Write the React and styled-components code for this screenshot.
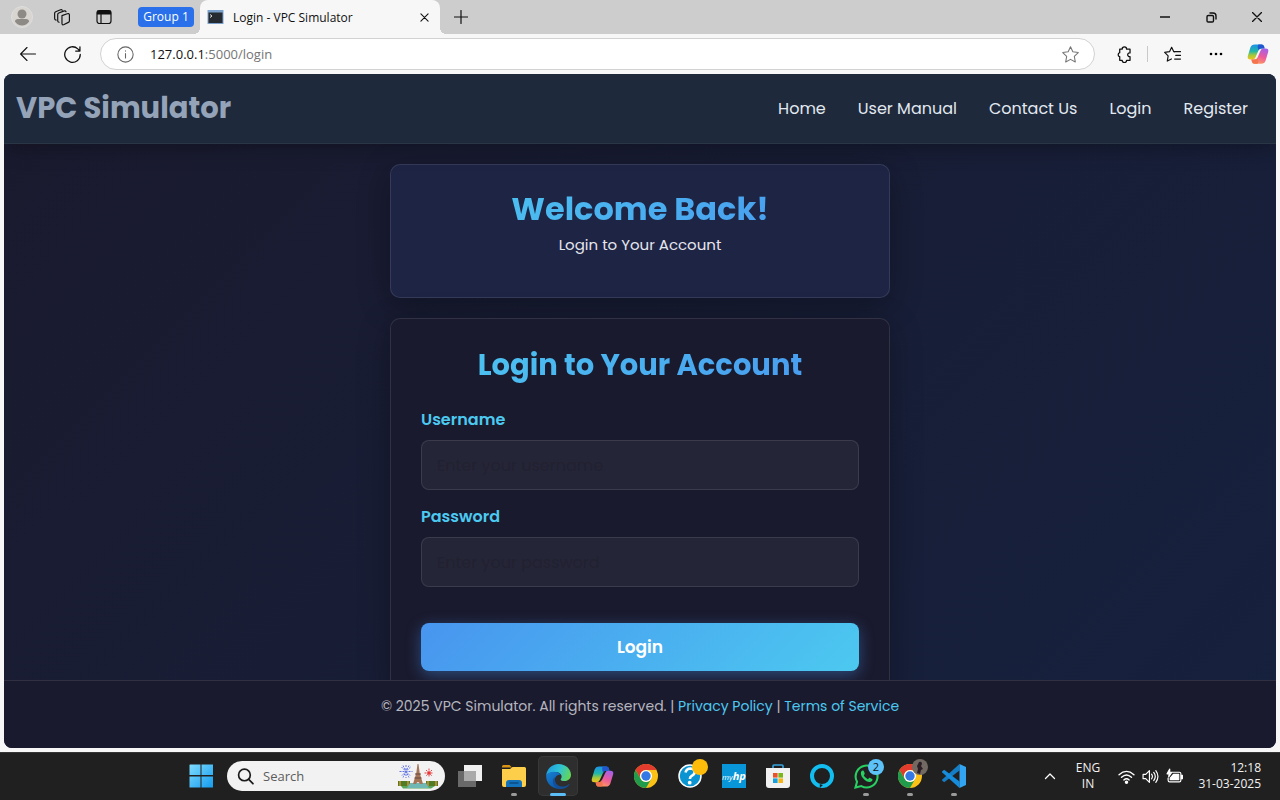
import React from "react";
import styled, { createGlobalStyle } from "styled-components";

const ui = `"Segoe UI", "Open Sans", "Noto Sans", sans-serif`;
const site = `Poppins, Inter, "Open Sans", sans-serif`;

const GlobalStyle = createGlobalStyle`
  *, *::before, *::after { box-sizing: border-box; }
  body { margin: 0; background: #f7f7f7; font-family: ${ui}; }
  button, input { font: inherit; }
  h1, h2, p { margin: 0; }
`;

const Desktop = styled.div`
  height: 100vh;
  display: flex;
  flex-direction: column;
  overflow: hidden;
`;

/* Browser chrome */
const TabStrip = styled.div`
  flex: none;
  height: 34px;
  display: flex;
  align-items: center;
  background: #cdcdcd;
  color: #111;
`;

const ChromeButton = styled.button`
  flex: none;
  width: ${(p) => p.$w || 42}px;
  height: 34px;
  padding: 0;
  border: 0;
  background: none;
  color: ${(p) => p.$color || "#111"};
  display: flex;
  align-items: center;
  justify-content: center;
`;

const ProfileTools = styled.div`
  display: flex;
  padding-left: 1px;
  width: 138px;
`;

const GroupChip = styled.button`
  width: 56px;
  height: 20px;
  padding: 0;
  border: 0;
  border-radius: 4px;
  background: #2970ea;
  color: #fff;
  font-size: 12px;
  line-height: 20px;
`;

const Tab = styled.div`
  position: relative;
  align-self: stretch;
  width: 240px;
  margin-left: 6px;
  padding-left: 7px;
  display: flex;
  align-items: center;
  gap: 9px;
  background: #f7f7f7;
  border-radius: 8px 8px 0 0;
  &::before, &::after {
    content: "";
    position: absolute;
    bottom: 0;
    width: 6px;
    height: 6px;
  }
  &::before { right: 100%; background: radial-gradient(circle at 0 0, #cdcdcd 6px, #f7f7f7 6px); }
  &::after { left: 100%; background: radial-gradient(circle at 100% 0, #cdcdcd 6px, #f7f7f7 6px); }
`;

const TabTitle = styled.span`
  flex: 1;
  font-size: 12px;
  white-space: nowrap;
`;

const WindowControls = styled.div`
  margin-left: auto;
  display: flex;
`;

const Toolbar = styled.div`
  flex: none;
  height: 40px;
  padding: 0 2px 0 6px;
  display: flex;
  align-items: center;
  background: #f7f7f7;
`;

const AddressBar = styled.div`
  flex: 1;
  height: 32px;
  margin: 0 8px 0 6px;
  padding: 0 5px 0 16px;
  display: flex;
  align-items: center;
  gap: 16px;
  background: #fff;
  border: 1px solid #d2d2d2;
  border-radius: 16px;
`;

const Url = styled.span`
  flex: 1;
  font-size: 13px;
  color: #757575;
  b { font-weight: 400; color: #111; }
`;

const ToolbarDivider = styled.span`
  width: 1px;
  height: 16px;
  margin: 0 2px;
  background: #c9c9c9;
`;

/* Web page */
const Frame = styled.div`
  flex: 1;
  min-height: 0;
  padding: 0 4px 4px;
  background: #f7f7f7;
  display: flex;
`;

const Page = styled.div`
  flex: 1;
  display: flex;
  flex-direction: column;
  overflow: hidden;
  border-radius: 8px;
  background: linear-gradient(135deg, #1a1a2e, #16213e);
  font-family: ${site};
  color: #e6e6ee;
`;

const SiteHeader = styled.header`
  flex: none;
  position: relative;
  height: 70px;
  padding: 0 28px 0 12px;
  display: flex;
  align-items: center;
  justify-content: space-between;
  background: #1e293b;
  border-bottom: 1px solid #2a3546;
  box-shadow: 0 4px 20px rgba(0, 0, 0, 0.3);
`;

const Brand = styled.a`
  font-size: 29px;
  font-weight: 700;
  color: #94a3b8;
  text-decoration: none;
  white-space: nowrap;
`;

const Nav = styled.nav`
  display: flex;
  gap: 32px;
`;

const NavLink = styled.a`
  font-size: 16px;
  color: #e2e8f0;
  text-decoration: none;
  white-space: nowrap;
`;

const Main = styled.main`
  flex: 1;
  min-height: 0;
  overflow: hidden;
  padding: 20px;
  display: flex;
  flex-direction: column;
  align-items: center;
  gap: 20px;
`;

const Card = styled.section`
  flex: none;
  width: 100%;
  max-width: 500px;
  padding: 24px 30px 40px;
  border: 1px solid rgba(255, 255, 255, 0.1);
  border-radius: 10px;
  background: ${(p) => p.$bg};
  box-shadow: 0 8px 32px rgba(0, 0, 0, 0.3);
`;

const Heading = styled.h2`
  font-size: ${(p) => p.$size}px;
  line-height: ${(p) => p.$line}px;
  font-weight: 700;
  text-align: center;
  color: transparent;
  background: linear-gradient(135deg, #4cc9f0, #4895ef);
  background-clip: text;
  -webkit-background-clip: text;
`;

const Intro = styled.p`
  margin-top: 4px;
  font-size: 15px;
  line-height: 24px;
  text-align: center;
`;

const Form = styled.form`
  margin-top: 21px;
  display: flex;
  flex-direction: column;
`;

const Label = styled.label`
  margin-bottom: 8px;
  font-size: 16px;
  line-height: 24px;
  font-weight: 600;
  color: #4cc9f0;
`;

const Field = styled.input`
  width: 100%;
  height: 50px;
  margin-bottom: 15px;
  padding: 0 15px;
  border: 1px solid rgba(255, 255, 255, 0.1);
  border-radius: 8px;
  background: rgba(255, 255, 255, 0.05);
  color: #fff;
  font-size: 16px;
  &::placeholder { color: #212130; opacity: 1; }
`;

const Submit = styled.button`
  height: 48px;
  margin-top: 21px;
  border: 0;
  border-radius: 8px;
  background: linear-gradient(135deg, #4895ef, #4cc9f0);
  box-shadow: 0 4px 15px rgba(72, 149, 239, 0.4);
  color: #fff;
  font-size: 17px;
  font-weight: 600;
`;

const SiteFooter = styled.footer`
  flex: none;
  position: relative;
  height: 68px;
  padding-top: 13px;
  border-top: 1px solid #303042;
  background: #1a1a2e;
  color: #b5b5be;
  font-size: 14px;
  line-height: 24px;
  text-align: center;
  a { color: #4cc9f0; text-decoration: none; }
`;

/* Taskbar */
const Taskbar = styled.div`
  flex: none;
  height: 48px;
  padding: 0 19px 0 179px;
  display: flex;
  align-items: center;
  background: #202020;
  box-shadow: inset 0 1px #363636;
  color: #f2f2f2;
`;

const TaskButton = styled.button`
  flex: none;
  position: relative;
  width: ${(p) => p.$w || 44}px;
  height: 48px;
  padding: 0;
  border: 0;
  background: none;
  color: #fff;
  display: grid;
  place-items: center;
`;

const ActiveTask = styled(TaskButton)`
  width: 40px;
  height: 40px;
  margin: 0 2px;
  border-radius: 5px;
  background: #2e2e2e;
  box-shadow: inset 0 0 0 1px #383838;
`;

const Running = styled.span`
  position: absolute;
  bottom: ${(p) => (p.$active ? 0 : 4)}px;
  left: 50%;
  width: ${(p) => (p.$active ? 16 : 6)}px;
  height: 3px;
  transform: translateX(-50%);
  border-radius: 2px;
  background: ${(p) => (p.$active ? "#5cbcf5" : "#9a9a9a")};
`;

const Badge = styled.span`
  position: absolute;
  top: 7px;
  right: 4px;
  width: 16px;
  height: 16px;
  border-radius: 50%;
  background: ${(p) => p.$bg};
  color: #111;
  font-size: 11px;
  line-height: 16px;
  text-align: center;
`;

const SearchBox = styled.label`
  width: 218px;
  height: 30px;
  margin: 0 3px 0 4px;
  padding: 0 6px 0 10px;
  display: flex;
  align-items: center;
  gap: 9px;
  border-radius: 15px;
  background: #f2f2f2;
  color: #1b1b1b;
  input {
    flex: 1;
    min-width: 0;
    padding: 0;
    border: 0;
    background: none;
    font-size: 13px;
  }
  input::placeholder { color: #5c5c5c; opacity: 1; }
`;

const HpTile = styled.span`
  width: 24px;
  height: 24px;
  background: #0996d8;
  color: #fff;
  font-size: 8px;
  line-height: 24px;
  font-style: italic;
  text-align: center;
  b { font-size: 11px; }
`;

const Tray = styled.div`
  margin-left: auto;
  display: flex;
  align-items: center;
  font-size: 12px;
  line-height: 16px;
`;

const Language = styled.div`
  width: 44px;
  text-align: center;
`;

const Clock = styled.div`
  width: 71px;
  text-align: right;
  white-space: nowrap;
`;

/* Icons */
const Line = ({ s = 16, w = 1, box = 16, children, ...rest }) => (
  <svg width={s} height={s} viewBox={`0 0 ${box} ${box}`} fill="none" stroke="currentColor" strokeWidth={w} strokeLinecap="round" strokeLinejoin="round" aria-hidden="true" {...rest}>
    {children}
  </svg>
);

const Copilot = ({ s, id }) => (
  <svg width={s} height={s} viewBox="0 0 24 24" aria-hidden="true">
    <defs>
      <linearGradient id={`${id}a`} x1="0.2" y1="0" x2="0.2" y2="1">
        <stop offset="0" stopColor="#1b93e8" /><stop offset="0.45" stopColor="#22b5a8" /><stop offset="0.72" stopColor="#a4c83c" /><stop offset="1" stopColor="#f2c41b" />
      </linearGradient>
      <linearGradient id={`${id}b`} x1="0.7" y1="0" x2="0.3" y2="1">
        <stop offset="0" stopColor="#a561e6" /><stop offset="0.5" stopColor="#ec5a9d" /><stop offset="1" stopColor="#ff9c5c" />
      </linearGradient>
    </defs>
    <path d="M8.500 1.500H16q2 0 2.600 2l.6 2.500h-3.400q-2.600 0-3.400 2.500L9.300 15.500q-.8 2.500-3.300 2.500H3.600Q0 18 .9 14.300L3.700 5Q4.800 1.500 8.500 1.500z" fill={`url(#${id}a)`} />
    <path d="M12.500 1.500H16q2 0 2.600 2l.6 2.500h-3.400q-2.300 0-3.200 2l-.8-2.600q-.6-3.100.7-3.900z" fill="#2156cf" />
    <path d="M15.500 22.500H8q-2 0-2.600-2L4.800 18h3.400q2.600 0 3.400-2.500l3.100-7q.8-2.500 3.300-2.500h2.400Q24 6 23.100 9.700L20.300 19q-1.100 3.500-4.800 3.500z" fill={`url(#${id}b)`} />
    <path d="M11.500 22.500H8q-2 0-2.600-2L4.800 18h3.400q2.300 0 3.200-2l.8 2.600q.6 3.100-.7 3.900z" fill="#f4744f" />
  </svg>
);

const ChromeLogo = () => (
  <svg width="24" height="24" viewBox="0 0 24 24" aria-hidden="true">
    <circle cx="12" cy="12" r="12" fill="#fbc116" />
    <path d="M1.600 6A12 12 0 0 1 22.400 6H12a6 6 0 0 0-5.200 9z" fill="#e33b2e" />
    <path d="M1.600 6A12 12 0 0 0 12 24l5.200-9a6 6 0 0 1-10.400 0z" fill="#219c4c" />
    <circle cx="12" cy="12" r="6" fill="#fff" />
    <circle cx="12" cy="12" r="4.700" fill="#3478e5" />
  </svg>
);

const EdgeLogo = () => (
  <svg width="25" height="25" viewBox="0 0 24 24" aria-hidden="true">
    <defs>
      <linearGradient id="edTop" x1="0" y1=".3" x2="1" y2=".6"><stop offset="0" stopColor="#1d9ce0" /><stop offset=".5" stopColor="#2fc2d5" /><stop offset="1" stopColor="#65d853" /></linearGradient>
      <linearGradient id="edLow" x1="0" y1="0" x2=".8" y2="1"><stop offset="0" stopColor="#1683d6" /><stop offset="1" stopColor="#0c50a3" /></linearGradient>
    </defs>
    <path d="M.2 11C.8 4.800 5.600 0 12 0c7 0 12 5 12 10.400 0 3.700-2.800 6-6 6-2.500 0-4-.8-4-1.600 0-.6 1-1 1-2.900 0-2.400-2.700-4.300-6.200-4.300C5 7.600 2 8.800.2 11z" fill="url(#edTop)" />
    <path d="M.2 11c1.300-2.200 4.200-3.500 7.300-3.500 3.200 0 5.500 1.100 6.700 3-1.100-.5-5.700.2-5.700 4.800 0 4 3.300 7.500 7.100 8A12 12 0 0 1 .2 11z" fill="url(#edLow)" />
    <path d="M9.200 12.400c-1.600 2.400-.4 6 2 7.800 3.600 2.600 8.200 1.500 10.600-.8.500-.5.900 0 .6.500-2 2.800-5 4.100-8.400 4.100-4.300-.8-7.500-4-7.300-7.600 0-2 .9-3.300 2.500-4z" fill="#124f98" />
  </svg>
);

const Apps = () => (
  <>
    <TaskButton aria-label="Task view">
      <svg width="24" height="24" viewBox="0 0 24 24"><path d="M6 1h18v16H6z" fill="#f0f0f0" /><path d="M0 7h18v16H0z" fill="#777" opacity=".85" /><path d="M6 7h12v10H6z" fill="#aaa" /></svg>
    </TaskButton>
    <TaskButton aria-label="File Explorer">
      <svg width="24" height="24" viewBox="0 0 24 24"><path d="M0 2.500Q0 1 1.500 1h6L10 3.500H0z" fill="#d99413" /><path d="M0 5h8l2.500-2H22.500Q24 3 24 4.500V21q0 2-2 2H2q-2 0-2-2z" fill="#fdce49" /><path d="M4 23v-4q0-3 3-3h10q3 0 3 3v4z" fill="#1372bc" /><path d="M7.500 19h9" stroke="#0b4d83" strokeWidth="1.500" /></svg>
      <Running />
    </TaskButton>
    <ActiveTask aria-label="Microsoft Edge"><EdgeLogo /><Running $active /></ActiveTask>
    <TaskButton aria-label="Copilot"><Copilot s={23} id="task" /></TaskButton>
    <TaskButton aria-label="Google Chrome"><ChromeLogo /></TaskButton>
    <TaskButton aria-label="Support Assistant">
      <svg width="24" height="24" viewBox="0 0 24 24"><circle cx="12" cy="12" r="11" fill="#0a94d1" stroke="#fff" strokeWidth="1.500" /><path d="M7.500 8.500q1-4 5-4 4.300.2 4.200 3.700-.2 2.300-3 3.700-1.800 1-1.800 3.100" fill="none" stroke="#fff" strokeWidth="2.600" /><circle cx="11.700" cy="18.700" r="1.900" fill="#fff" /></svg>
      <Badge $bg="#fdbb0a" />
    </TaskButton>
    <TaskButton aria-label="myHP"><HpTile>my<b>hp</b></HpTile></TaskButton>
    <TaskButton aria-label="Microsoft Store">
      <svg width="24" height="24" viewBox="0 0 24 24"><path d="M7 4V2q0-1 1-1h8q1 0 1 1v2" fill="none" stroke="#35a4dd" strokeWidth="1.600" /><path d="M0 4h24v17q0 3-3 3H3q-3 0-3-3z" fill="#f1f1f1" /><path d="M7 9h4.600v4.600H7z" fill="#e9512a" /><path d="M12.400 9H17v4.600h-4.600z" fill="#7bb51c" /><path d="M7 14.400h4.600V19H7z" fill="#189fdd" /><path d="M12.400 14.400H17V19h-4.600z" fill="#f5b518" /></svg>
    </TaskButton>
    <TaskButton aria-label="Alexa">
      <svg width="24" height="24" viewBox="0 0 24 24" fill="none"><circle cx="12" cy="12" r="10" stroke="#12bdf0" strokeWidth="4" /><path d="M9.800 20v4l3.200-3" fill="#202020" /></svg>
    </TaskButton>
    <TaskButton aria-label="WhatsApp">
      <svg width="25" height="25" viewBox="0 0 24 24"><path d="M1.400 22.600l1.500-5.500A10.500 10.500 0 1 1 7 21.200z" fill="#202020" stroke="#28cf62" strokeWidth="2" /><path d="M8.200 6.300c-.6.1-1.700 1-1.600 2.700.2 3.600 4.500 8 8.300 8.300 1.500.1 2.900-1 2.900-2.300 0-.5-2.500-1.700-3-1.700-.5.100-1 1.400-1.400 1.400-1.300-.4-3.500-2.500-4-3.800 0-.5 1-1.100.9-1.600-.1-.6-.9-3-1.400-3z" fill="#28cf62" /></svg>
      <Badge $bg="#5cc2f7">2</Badge><Running />
    </TaskButton>
    <TaskButton aria-label="Google Chrome, second profile"><ChromeLogo />
      <Badge $bg="#726963"><svg width="16" height="16" viewBox="0 0 16 16"><path d="M7 3q3-1 3 2l-1 2 2 3-2 1-1 4-3-1 1-4-1-3z" fill="#2c1e27" /></svg></Badge><Running />
    </TaskButton>
    <TaskButton aria-label="Visual Studio Code">
      <svg width="24" height="24" viewBox="0 0 24 24"><path d="M17.500 6.500L2.200 18.300.3 16.800q-.6-.6 0-1.200L17.500 0z" fill="#147dc5" /><path d="M17.500 17.500L2.200 5.700.3 7.200q-.6.600 0 1.200L17.500 24z" fill="#168cdc" /><path d="M17.500 0L24 3v18l-6.500 3z" fill="#32a5f2" /></svg>
      <Running />
    </TaskButton>
  </>
);

const navItems = ["Home", "User Manual", "Contact Us", "Login", "Register"];

export default function App() {
  return (
    <Desktop>
      <GlobalStyle />
      <TabStrip>
        <ProfileTools>
          <ChromeButton aria-label="Profile">
            <svg width="22" height="22" viewBox="0 0 22 22"><circle cx="11" cy="11" r="10.500" fill="#d8d5d1" stroke="#dedede" /><circle cx="11" cy="8" r="4.500" fill="#8d8985" /><path d="M4 15.500q0-2.500 3-2.500h8q3 0 3 2.500-2.500 4-7 4t-7-4z" fill="#8d8985" /></svg>
          </ChromeButton>
          <ChromeButton $w={38} aria-label="Workspaces">
            <Line s={17} w={1.1}><path d="M7.500 6.200l5-1.700q2-.5 2 1.200v5.500q0 1-1 1.400l-4 2q-2 .9-2-.9z" /><path d="M4.800 12.500q-1.300-.2-1.300-1.500V5.200q0-1 1-1.400L9 2q1.800-.7 2.300.6" /><path d="M2 10.500Q.6 10.200.6 9V4q0-1 1-1.400l4-1.700Q7.200.3 7.800 1.200" /></Line>
          </ChromeButton>
          <ChromeButton $w={46} aria-label="Tab actions">
            <Line s={16} w={1.2}><rect x="1" y="1.500" width="14" height="13" rx="2.500" /><path d="M1.500 2h13v3h-13z" fill="currentColor" /><path d="M5 5v9.500" /></Line>
          </ChromeButton>
        </ProfileTools>
        <GroupChip>Group 1</GroupChip>
        <Tab>
          <svg width="17" height="14" viewBox="0 0 16 14"><path d="M0 0h16v14H0z" fill="#7aa0cc" /><path d="M1 2.500h14V13H1z" fill="#252b31" /><path d="M2.500 4.500l2 1.500-2 1.500" fill="none" stroke="#ddd" /></svg>
          <TabTitle>Login - VPC Simulator</TabTitle>
          <ChromeButton $w={32} aria-label="Close tab"><Line s={9} box={10} w={1.2}><path d="M1 1l8 8M9 1L1 9" /></Line></ChromeButton>
        </Tab>
        <ChromeButton aria-label="New tab"><Line s={14} box={14} w={1.2}><path d="M7 .5v13M.5 7h13" /></Line></ChromeButton>
        <WindowControls>
          <ChromeButton $w={46} aria-label="Minimize"><Line s={10} box={10} w={1.5}><path d="M0 5h10" /></Line></ChromeButton>
          <ChromeButton $w={46} aria-label="Restore"><Line s={11} box={11} w={1.4}><rect x="1" y="3.500" width="6.500" height="6.500" rx="1.200" /><path d="M4 1h3q3 0 3 3v3" /></Line></ChromeButton>
          <ChromeButton $w={46} aria-label="Close"><Line s={10} box={10} w={1.4}><path d="M.5.500l9 9M9.500.500l-9 9" /></Line></ChromeButton>
        </WindowControls>
      </TabStrip>

      <Toolbar>
        <ChromeButton $w={44} aria-label="Back"><Line s={16} w={1.1}><path d="M15.500 8H.8M7 1.500L.6 8 7 14.500" /></Line></ChromeButton>
        <ChromeButton $w={44} aria-label="Refresh"><Line s={17} w={1.2}><path d="M15.300 8A7.300 7.300 0 1 1 13 2.700L15 4.800M15 .8v4h-4" /></Line></ChromeButton>
        <AddressBar>
          <Line s={17} w={1} color="#666"><circle cx="8" cy="8" r="7.200" /><path d="M8 7.200v4M8 4.600v.2" /></Line>
          <Url><b>127.0.0.1</b>:5000/login</Url>
          <ChromeButton $w={38} $color="#767676" aria-label="Add to favorites"><Line s={17} w={1}><path d="M8 .8l2.200 4.700 5.100.7-3.700 3.600.9 5.200L8 12.600 3.500 15l.9-5.200L.7 6.200l5.100-.7z" /></Line></ChromeButton>
        </AddressBar>
        <ChromeButton aria-label="Extensions"><Line s={17} w={1.2}><path d="M3.500 3h2.300a2.100 2.100 0 0 1 4.200 0h3.200v3.500a1.800 1.800 0 1 0 0 3.500v3.500H10a2.100 2.100 0 0 1-4.200 0H3.500V10a1.900 1.900 0 0 1 0-3.700z" /></Line></ChromeButton>
        <ToolbarDivider />
        <ChromeButton $w={44} aria-label="Favorites"><Line s={17} w={1.1}><path d="M9.500 5.300H15.500M11 8.800h4.500M10 12.300h5.500M9.200 5.300L7.200 1.200 5.200 5.300.6 6l3.300 3.300-.8 4.900L7 12.200M9.200 5.300l1 .2" /></Line></ChromeButton>
        <ChromeButton $w={44} aria-label="More"><svg width="14" height="4" viewBox="0 0 14 4"><circle cx="2" cy="2" r="1.300" /><circle cx="7" cy="2" r="1.300" /><circle cx="12" cy="2" r="1.300" /></svg></ChromeButton>
        <ChromeButton $w={40} aria-label="Copilot"><Copilot s={22} id="bar" /></ChromeButton>
      </Toolbar>

      <Frame>
        <Page>
          <SiteHeader>
            <Brand href="#home">VPC Simulator</Brand>
            <Nav>
              {navItems.map((item) => <NavLink key={item} href="#nav">{item}</NavLink>)}
            </Nav>
          </SiteHeader>
          <Main>
            <Card $bg="#1e2444">
              <Heading as="h1" $size={32} $line={40}>Welcome Back!</Heading>
              <Intro>Login to Your Account</Intro>
            </Card>
            <Card $bg="#1a1a2e">
              <Heading $size={29} $line={44}>Login to Your Account</Heading>
              <Form>
                <Label htmlFor="username">Username</Label>
                <Field id="username" type="text" placeholder="Enter your username" />
                <Label htmlFor="password">Password</Label>
                <Field id="password" type="password" placeholder="Enter your password" />
                <Submit type="button">Login</Submit>
              </Form>
            </Card>
          </Main>
          <SiteFooter>
            © 2025 VPC Simulator. All rights reserved. | <a href="#privacy">Privacy Policy</a> | <a href="#terms">Terms of Service</a>
          </SiteFooter>
        </Page>
      </Frame>

      <Taskbar>
        <TaskButton aria-label="Start">
          <svg width="24" height="24" viewBox="0 0 24 24"><defs><linearGradient id="win" x1="0" y1="0" x2="1" y2="1"><stop offset="0" stopColor="#7fdcff" /><stop offset="1" stopColor="#149bee" /></linearGradient></defs><path d="M1 .5h10.500V11H.5V1zM12.500.500H24V11H12.500zM.5 12.500h11V23.500H.5zM12.500 12.500H24v11H12.500z" fill="url(#win)" /></svg>
        </TaskButton>
        <SearchBox>
          <Line s={17} w={1.6}><circle cx="7" cy="6.500" r="5.500" /><path d="M11 10.800l4 4" /></Line>
          <input type="text" placeholder="Search" aria-label="Search" />
          <svg width="42" height="26" viewBox="0 0 42 26" aria-hidden="true">
            <g stroke="#6375e6" strokeWidth="1" strokeDasharray="2 1"><path d="M9 2v13M2.500 8.500h13M4.500 4l9 9M13.500 4l-9 9M6 2.500l6 12M12 2.500l-6 12" /></g>
            <g stroke="#e04848" strokeWidth="1"><path d="M32 5.500v9M27.500 10h9M29 7l6 6M35 7l-6 6" strokeDasharray="2 1" /></g><circle cx="32" cy="10" r="1.800" fill="#e33" />
            <path d="M1 18h12v5H1zM29 18h12v5H29z" fill="#4f7d26" /><path d="M3 18v5M11 18v5M31 18v5M39 18v5" stroke="#b58a35" strokeWidth="2" />
            <path d="M4 23h34l-4 2.500H6z" fill="#5aa65b" /><path d="M13 20h16l3 5H10z" fill="#6fb8b5" />
            <path d="M20.500 1h1l1.200 9 3.300 11h-3q-2-4-4 0h-3l3.300-11z" fill="#a57558" /><path d="M18 11h6M17.500 15h7" stroke="#65483c" />
          </svg>
        </SearchBox>
        <Apps />
        <Tray>
          <TaskButton $w={32} aria-label="Show hidden icons"><Line s={12} box={12} w={1.3}><path d="M1.500 8.500L6 4l4.500 4.500" /></Line></TaskButton>
          <Language>ENG<br />IN</Language>
          <TaskButton $w={32} aria-label="Network"><Line s={17} w={1.3}><path d="M1 6.300q7-6.200 14 0M3.300 8.800q4.700-4.300 9.400 0M5.500 11.200q2.500-2.300 5 0" /><circle cx="8" cy="13.300" r="1" fill="currentColor" /></Line></TaskButton>
          <TaskButton $w={16} aria-label="Volume"><Line s={17} w={1.1}><path d="M1 6h2.500L7 2.500v11L3.500 10H1zM9 5.800q1.600 2.200 0 4.400M11 4.200q3 3.800 0 7.600M13 2.500q4 5.500 0 11" /></Line></TaskButton>
          <TaskButton $w={32} aria-label="Battery"><Line s={17} w={1.1}><path d="M6 4h6.500q1.500 0 1.500 1.500v6q0 1.500-1.500 1.500h-9Q2 13 2 11.500V9.500" /><path d="M7 6h5v5H4V9.500z" fill="currentColor" /><path d="M14.500 7v3h1V7z" /><path d="M3.500 1L1 5.500h2L2.500 8.500 5.500 4h-2z" fill="currentColor" /></Line></TaskButton>
          <Clock>12:18<br />31-03-2025</Clock>
        </Tray>
      </Taskbar>
    </Desktop>
  );
}
